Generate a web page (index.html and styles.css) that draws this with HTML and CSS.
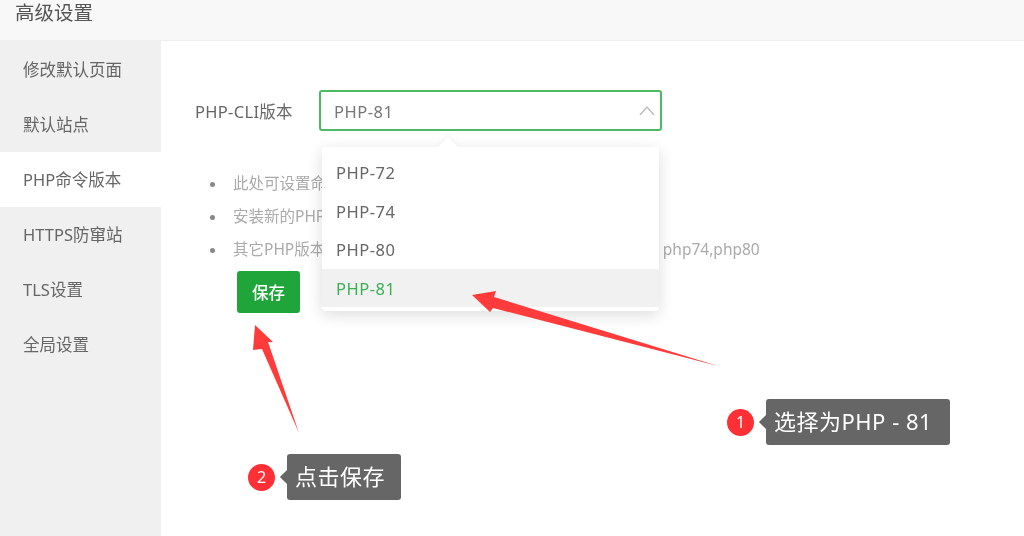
FILE: index.html
```html
<!DOCTYPE html>
<html lang="zh-CN">
<head>
  <meta charset="UTF-8">
  <title>高级设置</title>
  <link rel="stylesheet" href="styles.css">
</head>
<body>

<header class="title-bar">高级设置</header>

<div class="layout">
  <nav class="side-menu">
    <a href="#">修改默认页面</a>
    <a href="#">默认站点</a>
    <a href="#" class="active">PHP命令版本</a>
    <a href="#">HTTPS防窜站</a>
    <a href="#">TLS设置</a>
    <a href="#">全局设置</a>
  </nav>

  <main class="content">
    <div class="form-row">
      <label class="form-label">PHP-CLI版本</label>
      <div class="select">
        <span>PHP-81</span>
        <svg class="chevron" width="16" height="11" viewBox="0 0 16 11">
          <path d="M1 10 L8 2 L15 10" fill="none" stroke="#bbb" stroke-width="1.4"/>
        </svg>
        <div class="dropdown">
          <div class="option">PHP-72</div>
          <div class="option">PHP-74</div>
          <div class="option">PHP-80</div>
          <div class="option selected">PHP-81</div>
        </div>
      </div>
    </div>

    <ul class="tips">
      <li>此处可设置命令行运行php时使用的PHP版本</li>
      <li>安装新的PHP版本后此处需要重新设置</li>
      <li>其它PHP版本在命令行中可使用对应命令调用，例如： php72, php74,php80</li>
    </ul>

    <button type="button" class="save-btn">保存</button>
  </main>
</div>

<!-- annotations drawn over the page -->
<svg class="arrows" width="1024" height="536" viewBox="0 0 1024 536">
  <path d="M472 295 L496 291 L494 297 L718 366 L493 308 L490 312 Z" fill="#ff3b3b"/>
  <path d="M255 325 L273 342 L268 342 L299 433 L262 349 L253 350 Z" fill="#ff3b3b"/>
</svg>

<div class="callout callout-one">
  <span class="badge">1</span>
  <span class="bubble">选择为PHP - 81</span>
</div>
<div class="callout callout-two">
  <span class="badge">2</span>
  <span class="bubble">点击保存</span>
</div>

</body>
</html>
```

FILE: styles.css
```css
html, body {
  margin: 0;
  padding: 0;
  height: 536px;
  overflow: hidden;
}
body {
  position: relative;
  font-family: "Noto Sans", "Noto Sans CJK SC", sans-serif;
  font-size: 16.5px;
  color: #666;
  background-color: #fff;
  filter: blur(0.4px); /* the shot is a scaled-up capture */
}
.title-bar {
  height: 41px;
  box-sizing: border-box;
  padding-left: 15px;
  font-size: 19.5px;
  line-height: 25px;
  color: #555;
  background-color: #f8f8f8;
  border-bottom: 1px solid #f0f0f0;
}
.layout {
  display: flex;
  height: 495px;
}
.side-menu {
  width: 161px;
  padding-top: 1px;
  background-color: #f0f0f0;
}
.side-menu a {
  display: block;
  height: 55px;
  line-height: 55px;
  padding-left: 23px;
  color: #666;
  text-decoration: none;
}
.side-menu a.active {
  background-color: #fff;
}
.content {
  flex: 1;
  padding: 49px 0 0 34px;
}
.form-row {
  display: flex;
  align-items: center;
}
.form-label {
  width: 124px;
  letter-spacing: 0.3px;
}
.select {
  position: relative;
  width: 343px;
  height: 41px;
  box-sizing: border-box;
  padding-left: 13px;
  line-height: 39px;
  letter-spacing: 0.5px;
  color: #777;
  border: 2px solid #4cb963;
  border-radius: 3px;
}
.chevron {
  position: absolute;
  right: 5px;
  top: 13px;
}
.dropdown {
  position: absolute;
  left: 1px;
  top: 55px;
  width: 337px;
  height: 164px;
  box-sizing: border-box;
  padding-top: 6px;
  color: #666;
  background-color: #fff;
  border-radius: 4px;
  box-shadow: 0 4px 16px rgba(0, 0, 0, 0.14);
  z-index: 2;
}
.dropdown::before {
  content: "";
  position: absolute;
  left: 119px;
  top: -7px;
  width: 14px;
  height: 14px;
  background-color: #fff;
  transform: rotate(45deg);
  box-shadow: -2px -2px 4px rgba(0, 0, 0, 0.04);
  z-index: -1;
}
.option {
  height: 38.5px;
  line-height: 40px;
  padding-left: 14px;
}
.option.selected {
  color: #3cb055;
  background-color: #f1f1f1;
}
.tips {
  margin: 36px 0 0;
  padding: 0 0 0 38px;
  list-style: none;
  white-space: nowrap;
  color: #aaa;
  font-size: 15.5px;
  line-height: 33px;
}
.tips li::before {
  content: "";
  display: inline-block;
  width: 5px;
  height: 5px;
  margin-left: -23px;
  margin-right: 18px;
  vertical-align: middle;
  background-color: #888;
  border-radius: 50%;
}
.save-btn {
  display: block;
  margin: 5px 0 0 42px;
  width: 63px;
  height: 42px;
  padding: 0;
  font-family: inherit;
  font-size: 16.5px;
  font-weight: 500;
  color: #fff;
  background-color: #20a53a;
  border: none;
  border-radius: 3px;
}
.arrows {
  position: absolute;
  left: 0;
  top: 0;
  z-index: 3;
}
.callout {
  position: absolute;
  display: flex;
  align-items: center;
  gap: 12px;
  z-index: 4;
}
.callout-one {
  left: 727px;
  top: 399px;
}
.callout-two {
  left: 248px;
  top: 454px;
}
.badge {
  width: 27px;
  height: 27px;
  line-height: 27px;
  text-align: center;
  font-size: 16px;
  color: #fff;
  background-color: #ff2f36;
  border-radius: 50%;
}
.bubble {
  position: relative;
  height: 46px;
  line-height: 45px;
  padding: 0 18px 0 8px;
  font-size: 22px;
  letter-spacing: 0.5px;
  color: #fff;
  background-color: #666;
  border-radius: 3px;
}
.callout-two .bubble {
  padding-right: 16px;
}
.bubble::before {
  content: "";
  position: absolute;
  left: -5px;
  top: 18px;
  width: 10px;
  height: 10px;
  background-color: #666;
  transform: rotate(45deg);
}
```
